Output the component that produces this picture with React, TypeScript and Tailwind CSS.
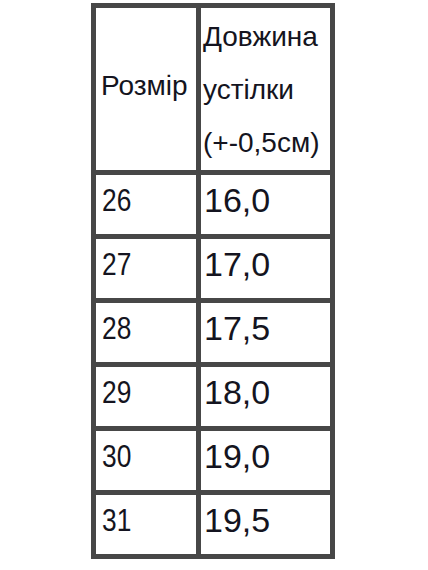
const rows = [
  ["26", "16,0"],
  ["27", "17,0"],
  ["28", "17,5"],
  ["29", "18,0"],
  ["30", "19,0"],
  ["31", "19,5"],
];

export default function App() {
  return (
    <div className="w-[428px] h-[570px] bg-white pt-[3px] pl-[91px] font-['Liberation_Sans',Arial,sans-serif] text-[#141420]">
      <div className="w-[244px] bg-[#474747] p-[5px] grid grid-cols-[100px_129px] gap-[5px]">
        <div className="bg-white h-[162px] flex items-center pl-[5px] pb-[6px] text-[28px]">Розмір</div>
        <div className="bg-white h-[162px] flex flex-col justify-center pl-[2px] text-[28px] leading-[53px]">
          <span>Довжина</span>
          <span>устілки</span>
          <span>(+-0,5см)</span>
        </div>
        {rows.map(([size, len]) => (
          <div key={size} className="contents">
            <div className="bg-white h-[59px] flex items-center pl-[6px] pb-[6px] text-[31px]">
              <span className="inline-block origin-left scale-x-[0.85]">{size}</span>
            </div>
            <div className="bg-white h-[59px] flex items-center pl-[3px] pb-[8px] text-[34px]">{len}</div>
          </div>
        ))}
      </div>
    </div>
  );
}
